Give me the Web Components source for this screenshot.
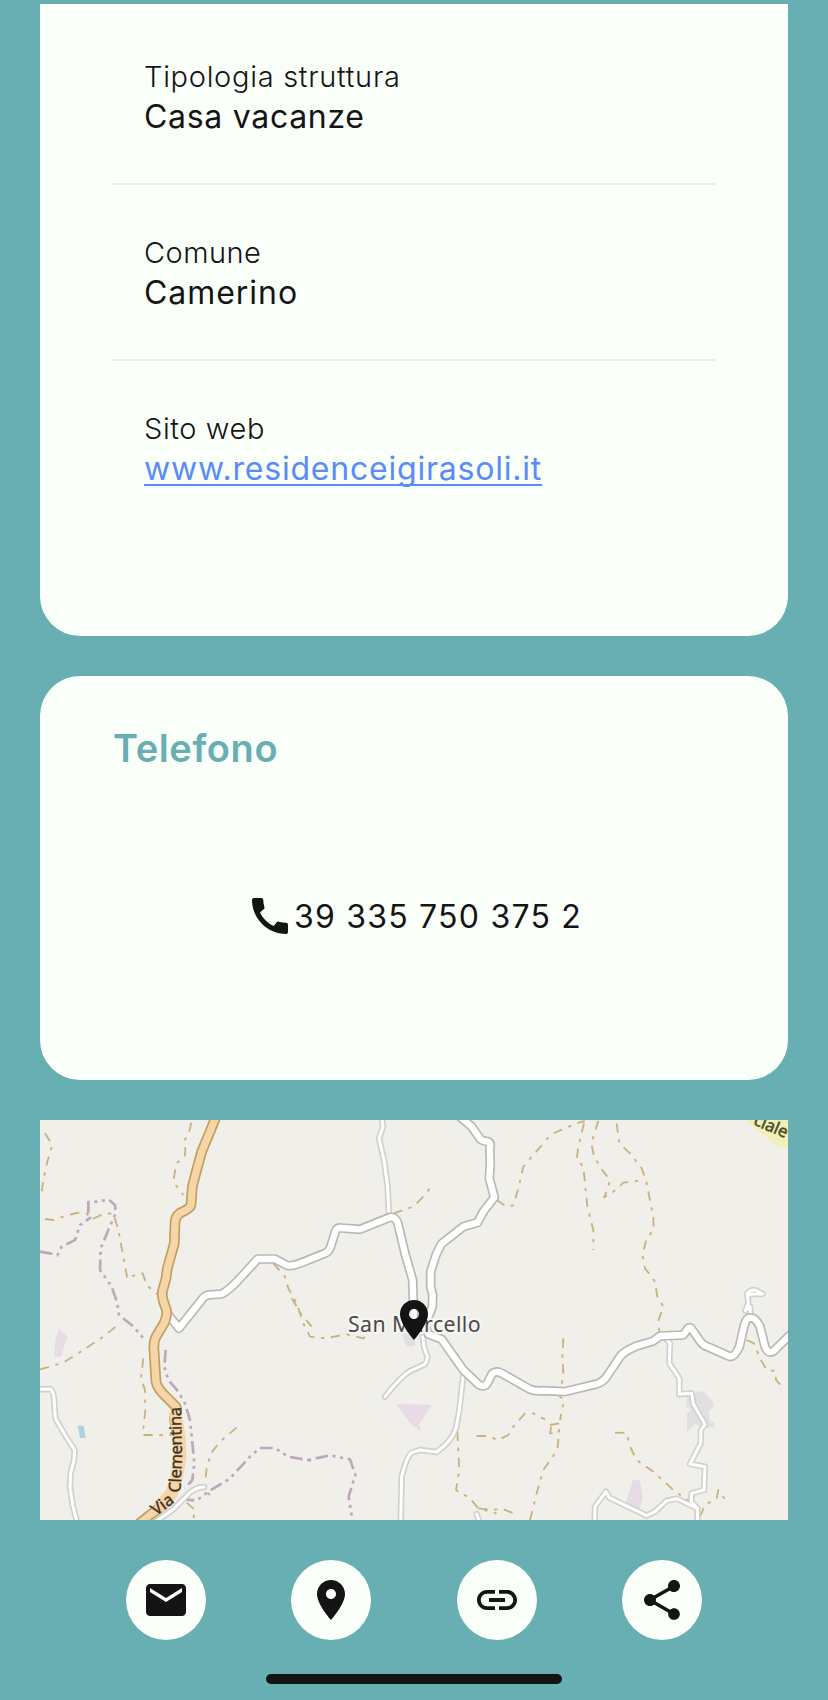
<!DOCTYPE html>
<html lang="it">
<head>
<meta charset="utf-8">
<title>Casa vacanze</title>
<style>
html,body{margin:0;padding:0}
body{background:#67afb2;color:#141414;font-family:Inter,"Liberation Sans",sans-serif;width:828px;height:1700px;overflow:hidden}
</style>
</head>
<body>
<app-page></app-page>
<script>
const ICONS = {
  mail:'M20 4H4c-1.100 0-1.990.9-1.990 2L2 18c0 1.100.9 2 2 2h16c1.100 0 2-.9 2-2V6c0-1.100-.9-2-2-2zm0 4l-8 5-8-5V6l8 5 8-5v2z',
  place:'M12 2C8.130 2 5 5.130 5 9c0 5.250 7 13 7 13s7-7.750 7-13c0-3.870-3.130-7-7-7zm0 9.500c-1.380 0-2.500-1.120-2.500-2.500s1.120-2.500 2.500-2.500 2.500 1.120 2.500 2.500-1.120 2.500-2.500 2.500z',
  link:'M3.900 12c0-1.710 1.390-3.100 3.100-3.100h4V7H7c-2.760 0-5 2.240-5 5s2.240 5 5 5h4v-1.900H7c-1.710 0-3.100-1.390-3.100-3.100zM8 13h8v-2H8v2zm9-6h-4v1.900h4c1.710 0 3.100 1.390 3.100 3.100s-1.390 3.100-3.100 3.100h-4V17h4c2.760 0 5-2.240 5-5s-2.240-5-5-5z',
  share:'M18 16.080c-.76 0-1.440.3-1.960.77L8.910 12.700c.05-.23.090-.46.090-.7s-.04-.47-.09-.7l7.050-4.110c.54.5 1.250.81 2.040.81 1.660 0 3-1.340 3-3s-1.340-3-3-3-3 1.340-3 3c0 .24.040.47.090.7L8.040 9.810C7.500 9.310 6.790 9 6 9c-1.660 0-3 1.340-3 3s1.340 3 3 3c.79 0 1.500-.31 2.040-.81l7.120 4.160c-.05.21-.08.43-.08.65 0 1.610 1.310 2.920 2.920 2.920 1.610 0 2.920-1.310 2.920-2.920s-1.310-2.920-2.920-2.920z',
  call:'M20.010 15.380c-1.230 0-2.420-.2-3.530-.56-.35-.12-.74-.03-1.010.24l-1.570 1.970c-2.830-1.350-5.480-3.900-6.890-6.830l1.950-1.660c.27-.28.35-.67.24-1.020-.37-1.110-.56-2.300-.56-3.530 0-.54-.45-.99-.99-.99H4.190C3.650 3 3 3.240 3 3.990 3 13.280 10.730 21 20.010 21c.71 0 .99-.63.990-1.180v-3.450c0-.54-.45-.99-.99-.99z'
};
function define(name, html, ready){
  const tpl = document.createElement('template');
  tpl.innerHTML = html;
  customElements.define(name, class extends HTMLElement{
    connectedCallback(){
      if(this.shadowRoot) return;
      this.attachShadow({mode:'open'}).append(tpl.content.cloneNode(true));
      if(ready) ready(this);
    }
  });
}
define('app-icon', `<style>:host{display:block;width:48px;height:48px}svg{display:block;width:100%;height:100%;fill:#141414}</style><svg viewBox="0 0 24 24"><path/></svg>`,
  el => el.shadowRoot.querySelector('path').setAttribute('d', ICONS[el.getAttribute('name')]));

define('info-card', `<style>:host{display:flex;flex-direction:column;box-sizing:border-box;background:#fbfffa;border-radius:40px;margin:0 40px}</style><slot></slot>`);

define('info-row', `<style>
:host{display:block;margin:0 72px;padding:48px 32px 46px;border-bottom:2px solid #ebf0ea;white-space:nowrap}
:host([last]){border-bottom:0}
.label{display:block;font-size:29px;font-weight:300;line-height:40px;letter-spacing:var(--label-track,.6px)}
.value{display:block;font-size:32px;line-height:40px;letter-spacing:var(--value-track,.7px)}
</style><span class="label"></span><span class="value"><slot></slot></span>`,
  el => el.shadowRoot.querySelector('.label').textContent = el.getAttribute('label'));

define('web-link', `<style>a{color:#5a8cf8;text-decoration:underline;text-decoration-thickness:2px;text-underline-offset:4px;text-decoration-skip-ink:none}</style><a><slot></slot></a>`);

define('phone-line', `<style>
:host{display:flex;flex:1;align-items:center;justify-content:center;margin-bottom:20px}
span{font-size:32px;line-height:40px;padding-top:1px;letter-spacing:1.220px;white-space:nowrap}
</style><app-icon name="call"></app-icon><span><slot></slot></span>`);

define('card-title', `<style>:host{display:block;margin:48px 72px 0 73px;font-size:38px;line-height:48px;font-weight:600;letter-spacing:.6px;color:#67afb2}</style><slot></slot>`);

define('round-button', `<style>:host{display:flex;align-items:center;justify-content:center;width:80px;height:80px;border-radius:50%;background:#fbfffa}</style><slot></slot>`);

define('action-bar', `<style>:host{display:flex;justify-content:center;gap:85.600px;padding:40px 0 34px}</style><slot></slot>`);

define('home-bar', `<style>:host{display:block;width:296px;height:10px;border-radius:5px;background:#141414;margin:0 auto}</style>`);

define('street-map', `<style>
:host{display:block;position:relative;width:748px;height:400px;margin:0 40px;background:#f0efea;overflow:hidden}
svg{display:block;width:100%;height:100%}
app-icon{position:absolute;left:350px;top:176px}
path{fill:none;stroke-linejoin:round;stroke-linecap:round}
.track{stroke:#c9b27c;stroke-width:5.500;stroke-dasharray:28 20 10 20;stroke-linecap:butt}
.border{stroke:#bba8bd;stroke-width:8;stroke-dasharray:38 14 9 14 9 14;stroke-linecap:butt}
.minor-case{stroke:#d0d0ce;stroke-width:19}
.minor{stroke:#fff;stroke-width:9}
.road-case{stroke:#b9b8b6;stroke-width:29}
.road{stroke:#fff;stroke-width:19}
.main-case{stroke:#c09f59;stroke-width:32}
.main{stroke:#f6d6a9;stroke-width:22}
.lilac{fill:#e7dbe6;stroke:none}
.built{fill:#e1dfe0;stroke:none}
text{font-family:"Noto Sans","Open Sans",sans-serif}
</style>
<svg viewBox="30 30 2244 1200">
<defs>
<g id="minors">
<path d="M1055 20L1059 50 1047 85 1062 150 1073 230 1077 318"/>
<path d="M1178 680L1182 710 1192 740Q1190 762 1180 765L1140 783Q1110 802 1065 860"/>
<path d="M1301 785L1288 900 1278 955Q1265 995 1220 1026L1170 1020 1145 1028Q1130 1040 1115 1100L1112 1240"/>
<path d="M20 838L62 837Q72 845 73 880L76 925 105 975 134 1020 132 1050 122 1090 120 1130 128 1185 142 1240"/>
<path d="M370 1240L430 1198 480 1147Q500 1132 522 1131"/>
<path d="M1908 686L1920 700 1918 760 1948 805 1948 853 1985 850 1990 882 2025 943 2013 960 2012 1000 1980 1062 2025 1070 2022 1140 1985 1150 1984 1175 2002 1195 2003 1240"/>
<path d="M1694 1240L1695 1190 1728 1145 1738 1163 1850 1217 1875 1205 1910 1172 1940 1166 2002 1195"/>
<path d="M1340 1212L1350 1240M2162 615L2160 590 2146 602 2155 580 2152 550Q2165 535 2180 542L2198 552 2165 552 2152 558"/>
</g>
<g id="roads">
<path d="M415 615L447 655 520 563Q530 552 550 554L575 552Q600 540 640 494L683 447 735 447 770 466Q785 470 810 460L885 430Q900 424 905 400L917 362Q922 352 935 354L990 358 1080 322Q1096 320 1103 338L1125 430 1148 510 1152 640"/>
<path d="M1290 20L1325 50 1350 86Q1358 94 1375 95 1384 100 1379 115L1381 160 1378 205 1393 262 1360 305 1342 338 1300 350 1234 402 1218 435 1202 485 1202 530 1208 555 1207 590Q1200 615 1182 640L1195 672 1235 688 1300 780 1345 823Q1362 834 1372 820L1386 792Q1395 783 1410 787L1500 838Q1515 844 1540 842L1605 845 1700 822Q1720 815 1730 800L1770 740Q1780 725 1820 708L1868 694 1890 678 1960 675 1973 656Q1980 648 1987 660L2010 693Q2020 708 2035 711L2100 740Q2115 740 2128 710L2143 645Q2150 622 2162 624 2175 620 2190 650L2205 710Q2215 735 2232 722L2290 665"/>
</g>
<path id="main" d="M560 15L540 65 515 125 500 180 487 230 483 285Q480 296 450 309 435 320 435 340L433 400 412 475 408 505 397 545Q395 565 408 595 414 615 402 640L378 680Q370 695 372 720L378 815Q382 835 405 857L438 890Q445 900 433 925L438 955 447 985 448 1040 440 1100 428 1145 400 1185 360 1215 325 1243"/>
<path id="via" d="M378 1218L432 1179Q452 1160 452 1135L456 1040 452 850"/>
</defs>
<path class="lilac" d="M87 655L112 680 93 740H72L77 685ZM1098 882L1206 884 1166 944 1176 966 1140 938ZM1809 1110L1830 1111 1838 1165 1828 1200 1787 1180Z"/>
<path class="built" d="M2005 842L2025 848 2050 878V892L2035 905 2040 935 2052 937V952L2020 955 1995 940 1972 965 1970 912 1985 900 1970 890V865ZM1115 670H1155V708H1130Z"/>
<path d="M143 947H161L167 984H150Z" style="fill:#b0d2de"/>
<path class="track" d="M484 38L475 75 464 90 466 122 464 138 440 160 432 200 437 225 460 255M45 70L67 105 52 155 42 200 34 250M45 327L70 330 105 318 140 309 170 310 185 328 220 312 250 310 265 360 280 440 292 507 325 490 338 490 350 525 380 552M30 778L100 758 160 720 220 680 270 640M340 745L333 805 345 840 346 900 339 965V975H425M620 953L570 995 543 1030 530 1075 523 1140 540 1155M730 460L765 500 775 535 800 580 820 640 840 680 885 685 950 673 1000 685 1050 640M785 565L812 610 845 650M1090 311L1120 300 1150 290 1175 265 1200 235M1282 965L1288 1080 1278 1140 1320 1165 1345 1195 1400 1210M1345 1195L1390 1200 1415 1195 1450 1210M1500 1230L1520 1150 1540 1080 1582 1020 1588 960M1340 978L1370 978 1405 990 1435 975 1450 950 1485 910 1510 910 1545 928M1560 945L1590 940 1585 970 1560 970 1565 945M1400 270L1430 290 1450 286 1465 235 1480 170 1540 100 1565 72 1640 40 1664 33M1662 40L1645 110 1640 148 1660 170 1665 220 1672 290 1690 360 1690 420M1705 32L1684 100 1692 140 1720 185 1740 210 1732 240 1722 262 1750 245 1780 218 1828 212M1760 40L1768 100 1800 130 1835 175 1848 210 1862 280 1870 320 1871 360 1850 385 1837 435 1845 475 1875 515 1882 560 1900 590 1886 630 1888 672M1600 685L1597 740 1600 790 1590 860 1602 870 1590 930M1755 968L1790 969 1800 1010 1820 1050 1870 1085 1930 1140 1985 1180M2150 690L2172 700 2190 745 2210 780 2235 783 2238 810 2260 835M2010 1220L2025 1185 2060 1165 2065 1140 2085 1168 2075 1180M470 1178L495 1200 490 1225"/>
<path class="border" d="M30 425L60 430 82 436 95 410 135 390 150 345 183 322M175 310V276L205 275 235 268 255 285 257 310 235 360 212 415 210 480 245 530 262 580 267 615 305 645 345 690M407 720L403 770 415 810 445 845 465 880 480 930 488 1010 493 1060 487 1110 465 1135M455 1167L500 1172 535 1145 600 1105 660 1040 690 1014 735 1014 775 1040 840 1051H830L900 1036 960 1048 976 1095 956 1160 968 1235"/>
<use href="#minors" class="minor-case"/><use href="#minors" class="minor"/>
<use href="#roads" class="road-case"/><use href="#roads" class="road"/>
<use href="#main" class="main-case"/><use href="#main" class="main"/>
<path d="M435 905L448 985 450 1040 440 1100 425 1150 385 1195" style="stroke:#f6d4a4;stroke-width:38;stroke-linecap:butt"/>
<text font-size="50" fill="#3b3223" stroke="#3b3223" stroke-width="1"><textPath href="#via">Via</textPath></text>
<text font-size="50" fill="#3b3223" stroke="#3b3223" stroke-width="1"><textPath href="#via" startOffset="103" textLength="258">Clementina</textPath></text>
<path d="M2143 28H2280V118L2245 112Z" style="fill:#f0f0b9"/>
<text transform="translate(2168 43) rotate(23)" font-size="50" fill="#4b4b27" stroke="#4b4b27" stroke-width="1.500" textLength="106">ciale</text>
<text x="954" y="666" font-size="64" textLength="398" fill="#4a4a4a" stroke="#f6f5f2" stroke-width="13" stroke-linejoin="round" paint-order="stroke">San Marcello</text>
</svg><app-icon name="place"></app-icon>`);

define('app-page', `<style>
:host{display:block;padding-top:4px}
.details{border-radius:0 0 40px 40px;height:632px;padding-top:5px}
.phone{height:404px;margin-top:40px;margin-bottom:40px}
.type{--label-track:.7px}
.town{--label-track:.45px;--value-track:.95px}
.site{--value-track:.78px}
</style>
<info-card class="details">
<info-row class="type" label="Tipologia struttura">Casa vacanze</info-row>
<info-row class="town" label="Comune">Camerino</info-row>
<info-row class="site" label="Sito web" last><web-link>www.residenceigirasoli.it</web-link></info-row>
</info-card>
<info-card class="phone"><card-title>Telefono</card-title><phone-line>39 335 750 375 2</phone-line></info-card>
<street-map></street-map>
<action-bar>
<round-button><app-icon name="mail"></app-icon></round-button>
<round-button><app-icon name="place"></app-icon></round-button>
<round-button><app-icon name="link"></app-icon></round-button>
<round-button><app-icon name="share"></app-icon></round-button>
</action-bar>
<home-bar></home-bar>`);
</script>
</body>
</html>
